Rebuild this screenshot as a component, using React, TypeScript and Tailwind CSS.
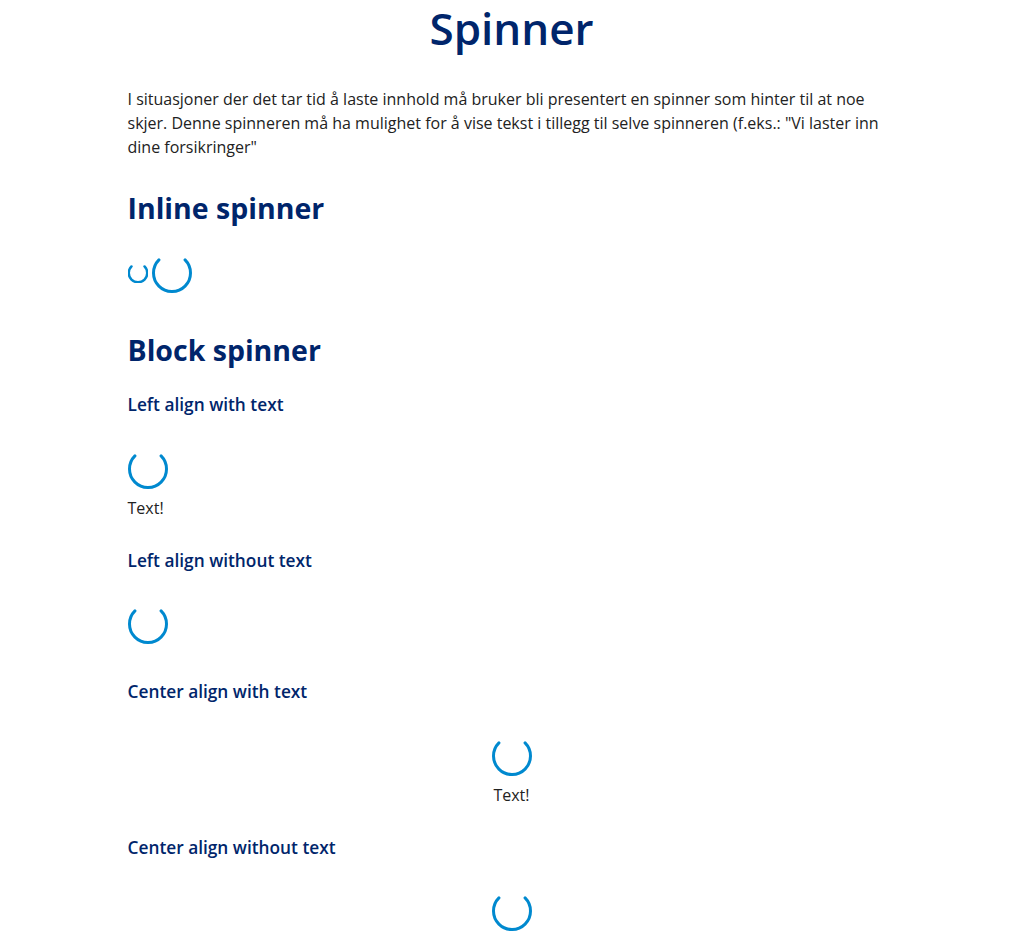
import React from "react";

const Spinner = ({ size = "lg" }: { size?: "sm" | "lg" }) =>
  size === "lg" ? (
    <svg width="40" height="40" viewBox="0 0 40 40" className="block shrink-0">
      <path
        d="M 33.08 6.92 A 18.5 18.5 0 1 1 6.92 6.92"
        fill="none"
        stroke="#0089cf"
        strokeWidth="3"
        strokeLinecap="round"
      />
    </svg>
  ) : (
    <svg width="20" height="20" viewBox="0 0 20 20" className="block shrink-0">
      <path
        d="M 16.54 3.46 A 9.25 9.25 0 1 1 3.46 3.46"
        fill="none"
        stroke="#0089cf"
        strokeWidth="2.5"
        strokeLinecap="round"
      />
    </svg>
  );

const H3 = ({ children, className = "" }: { children: React.ReactNode; className?: string }) => (
  <h3 className={`text-[17.3px] leading-[28px] font-semibold text-[#00256b] ${className}`}>{children}</h3>
);

export default function App() {
  return (
    <div
      className="min-h-screen bg-white"
      style={{ fontFamily: "'Open Sans', Lato, sans-serif" }}
    >
      <div className="max-w-3xl mx-auto pb-8">
        <h1 className="text-[44px] leading-[56px] font-semibold text-[#00256b] text-center">Spinner</h1>
        <p className="mt-[31px] text-[16px] leading-[24px] text-[#222222]">
          I situasjoner der det tar tid å laste innhold må bruker bli presentert en spinner som hinter til at noe
          skjer. Denne spinneren må ha mulighet for å vise tekst i tillegg til selve spinneren (f.eks.: "Vi laster inn
          dine forsikringer"
        </p>

        <h2 className="mt-[31px] text-[28.5px] leading-[36px] font-bold text-[#00256b]">Inline spinner</h2>
        <div className="mt-[27px] flex items-center gap-1">
          <Spinner size="sm" />
          <Spinner size="lg" />
        </div>

        <h2 className="mt-[39px] text-[28.5px] leading-[36px] font-bold text-[#00256b]">Block spinner</h2>

        <H3 className="mt-[23px]">Left align with text</H3>
        <div className="mt-[30px] flex flex-col items-start">
          <Spinner />
          <div className="mt-[7px] text-[16px] leading-[24px] text-[#222222]">Text!</div>
        </div>

        <H3 className="mt-[27px]">Left align without text</H3>
        <div className="mt-[29px] flex flex-col items-start">
          <Spinner />
        </div>

        <H3 className="mt-[34px]">Center align with text</H3>
        <div className="mt-[30px] flex flex-col items-center">
          <Spinner />
          <div className="mt-[7px] text-[16px] leading-[24px] text-[#222222]">Text!</div>
        </div>

        <H3 className="mt-[27px]">Center align without text</H3>
        <div className="mt-[29px] flex flex-col items-center">
          <Spinner />
        </div>
      </div>
    </div>
  );
}
